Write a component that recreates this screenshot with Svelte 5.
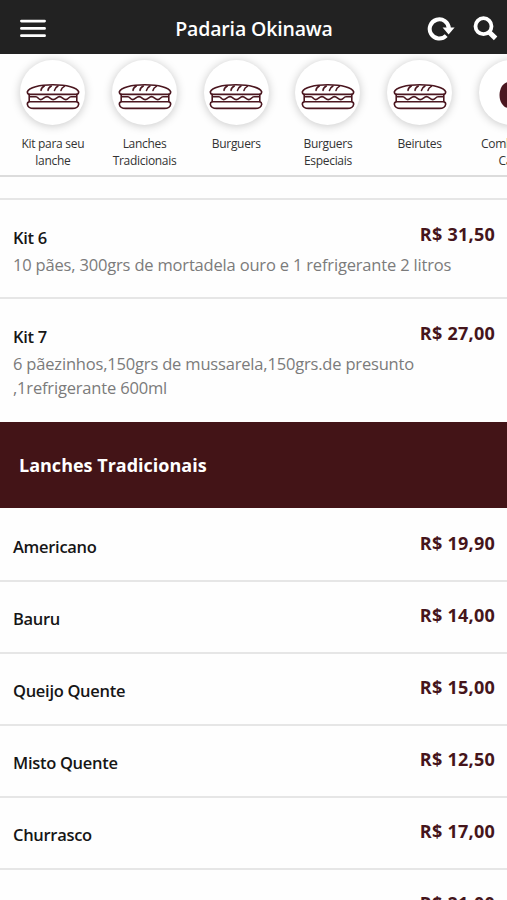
<script>
  const storeName = 'Padaria Okinawa';

  const categories = [
    { id: 1, name: 'Kit para seu lanche', icon: 'sandwich' },
    { id: 2, name: 'Lanches Tradicionais', icon: 'sandwich' },
    { id: 3, name: 'Burguers', icon: 'sandwich' },
    { id: 4, name: 'Burguers Especiais', icon: 'sandwich' },
    { id: 5, name: 'Beirutes', icon: 'sandwich' },
    { id: 6, name: 'Combos da Casa', icon: 'combo' },
  ];

  const kits = [
    { name: 'Kit 6', price: 31.5, description: '10 pães, 300grs de mortadela ouro e 1 refrigerante 2 litros' },
    { name: 'Kit 7', price: 27, description: '6 pãezinhos,150grs de mussarela,150grs.de presunto ,1refrigerante 600ml' },
  ];

  const sandwiches = [
    { name: 'Americano', price: 19.9 },
    { name: 'Bauru', price: 14 },
    { name: 'Queijo Quente', price: 15 },
    { name: 'Misto Quente', price: 12.5 },
    { name: 'Churrasco', price: 17 },
    { name: 'Calabresa', price: 21 },
  ];

  function formatPrice(value) {
    return 'R$ ' + value.toFixed(2).replace('.', ',');
  }
</script>

{#snippet product(item)}
  <li class="product">
    <div class="info">
      <h3>{item.name}</h3>
      {#if item.description}
        <p>{item.description}</p>
      {/if}
    </div>
    <span class="price">{formatPrice(item.price)}</span>
  </li>
{/snippet}

<div class="page">
  <header class="topbar">
    <button class="menu-btn" aria-label="Menu">
      <svg width="26" height="20" viewBox="0 0 26 20" fill="none" stroke="currentColor" stroke-width="2.7" stroke-linecap="round" aria-hidden="true">
        <path d="M1.4 2.1h23.2M1.4 9.4h23.2M1.4 16.7h23.2" />
      </svg>
    </button>
    <h1>{storeName}</h1>
    <div class="actions">
      <button aria-label="Atualizar">
        <svg width="28" height="26" viewBox="0 0 28 26" aria-hidden="true">
          <path d="M19.2 19.6A9.6 9.6 0 1 1 21.9 12.6" fill="none" stroke="currentColor" stroke-width="4" />
          <path d="M15.6 11.4H27.6L21.6 18.4Z" fill="currentColor" />
        </svg>
      </button>
      <button aria-label="Buscar">
        <svg width="25" height="25" viewBox="0 0 25 25" fill="none" stroke="currentColor" aria-hidden="true">
          <circle cx="10.5" cy="10.2" r="8" stroke-width="3.8" />
          <path d="M15.8 15.8L22.6 22.4" stroke-width="5" />
        </svg>
      </button>
    </div>
  </header>

  <nav class="categories">
    {#each categories as category (category.id)}
      <button class="category">
        <span class="bubble">
          {#if category.icon === 'sandwich'}
            <svg width="54" height="27" viewBox="0 0 54 27" fill="none" stroke="currentColor" stroke-width="1.6" stroke-linecap="round" stroke-linejoin="round" aria-hidden="true">
              <path d="M3.2 11.4C1.8 11 1.2 10 1.4 8.6C3 4.6 13 1.8 27 1.8S51 4.6 52.6 8.6C52.8 10 52.2 11 50.8 11.4Z" />
              <path d="M15 7.4Q15.2 4.6 18.3 3M22 7.4Q22.2 4.6 25.3 3M28.5 7.4Q29 4.6 32 3M35 7.4Q35.5 4.8 38.3 3.4" />
              <path d="M3.2 11.4V18.6M50.8 11.4V18.6M3.4 13.8H10C12 13.8 12.2 16.6 14.6 16.6S18.3 13.6 21 13.6S24.5 16.6 27.2 16.6S31 13.6 33.5 13.6S37.3 16.6 39.8 16.6S42.5 13.8 45 13.8H50.6" />
              <path d="M3.2 18.8H50.8C52.4 19.2 52.8 20.3 52.6 21.6C52 24.2 49.5 25.4 46.4 25.4H7.6C4.5 25.4 2 24.2 1.4 21.6C1.2 20.3 1.6 19.2 3.2 18.8Z" />
            </svg>
          {:else}
            <svg class="combo" width="24" height="28" viewBox="0 0 24 28" fill="currentColor" aria-hidden="true">
              <path d="M9 1C4 1.500 .5 7.500 .5 14S4 26.500 9 27Z" />
              <path d="M15 1c5 .5 8.500 6.500 8.500 13S20 26.500 15 27Z" />
            </svg>
          {/if}
        </span>
        <span class="label">{category.name}</span>
      </button>
    {/each}
  </nav>

  <main>
    <ul class="products kits">
      {#each kits as item (item.name)}
        {@render product(item)}
      {/each}
    </ul>

    <h2>Lanches Tradicionais</h2>
    <ul class="products">
      {#each sandwiches as item (item.name)}
        {@render product(item)}
      {/each}
    </ul>
  </main>
</div>

<style>
  :global(body) {
    margin: 0;
    background: #fefefe;
    overflow: hidden;
  }

  .page {
    height: 900px;
    overflow: hidden;
    font-family: 'Open Sans', 'Noto Sans', sans-serif;
    color: #161616;
  }

  button {
    padding: 0;
    border: none;
    background: none;
    color: inherit;
    font: inherit;
    cursor: pointer;
  }

  svg { display: block; }

  ul {
    margin: 0;
    padding: 0;
    list-style: none;
  }

  /* Top bar */
  .topbar {
    display: grid;
    grid-template-columns: 1fr auto 1fr;
    align-items: center;
    box-sizing: border-box;
    height: 54px;
    padding: 3px 9px 0 20px;
    background: #222;
    color: #fff;
  }

  .menu-btn { justify-self: start; }

  h1 {
    margin: 1px 10px 0 0;
    font-size: 19.5px;
    font-weight: 600;
    line-height: 28px;
    letter-spacing: -0.15px;
  }

  .actions {
    display: flex;
    justify-content: flex-end;
    align-items: center;
    gap: 18px;
  }

  /* Category strip */
  .categories {
    display: flex;
    box-sizing: border-box;
    height: 123px;
    padding: 6px 0 0 7px;
    overflow: hidden;
    border-bottom: 2px solid #dcdcdc;
  }

  .category {
    flex: 0 0 91.7px;
    display: flex;
    flex-direction: column;
    align-items: center;
  }

  .bubble {
    display: flex;
    align-items: center;
    justify-content: center;
    box-sizing: border-box;
    width: 65px;
    height: 65px;
    padding-top: 8px;
    border-radius: 50%;
    background: #fff;
    color: #4b1720;
    box-shadow: 0 1px 10px rgba(0, 0, 0, 0.22);
  }

  .combo { margin-top: -3px; }

  .label {
    width: 68px;
    margin-top: 10px;
    font-size: 12px;
    line-height: 17px;
    letter-spacing: -0.3px;
    text-align: center;
    color: #333;
  }

  /* Products */
  .kits {
    margin-top: 21px;
    border-top: 2px solid #e6e6e6;
  }

  .product {
    display: flex;
    justify-content: space-between;
    box-sizing: border-box;
    min-height: 72px;
    padding: 24px 12px 21px 13px;
    border-bottom: 2px solid #e6e6e6;
  }

  .kits .product { padding: 25px 12px 20px 13px; }

  .kits .product:last-child {
    padding-bottom: 21px;
    border-bottom: none;
  }

  .info { width: 450px; margin-right: -60px; }

  h3 {
    margin: 0;
    font-size: 16.5px;
    font-weight: 600;
    line-height: 25px;
    letter-spacing: -0.3px;
  }

  p {
    margin: 2.5px 0 0;
    font-size: 16.5px;
    line-height: 24.5px;
    letter-spacing: -0.18px;
    color: #7b7b7b;
  }

  .price {
    margin-top: -4px;
    font-size: 18px;
    font-weight: 700;
    line-height: 26px;
    letter-spacing: 0.25px;
    white-space: nowrap;
    color: #45151b;
  }

  h2 {
    margin: 0 0 2px;
    padding: 0 19px;
    background: #431417;
    color: #fff;
    font-size: 18px;
    font-weight: 700;
    line-height: 86px;
  }
</style>
